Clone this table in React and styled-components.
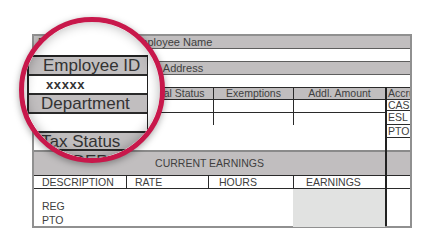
import styled, { createGlobalStyle } from "styled-components";

const GlobalStyle = createGlobalStyle`
  html, body { margin: 0; padding: 0; background: #fff; }
  body { font-family: "Liberation Sans", Arial, sans-serif; }
`;

const WITH_COLS = "97px 82px 80px 92px";
const EARN_COLS = "92px 82px 85px 92px";

const App = () => {
    return (
        <Page>
            <GlobalStyle />
            <Form>
                <Band $h={13}>
                    <SideLabel>Employee ID</SideLabel>
                    <Label>Employee Name</Label>
                </Band>
                <Blank />
                <Band $h={14} $top>
                    <SideLabel>Department</SideLabel>
                    <Label>Home Address</Label>
                </Band>
                <Blank />
                <Main>
                    <Left>
                        <Grid $cols={WITH_COLS} $h={13} $gray $top $bottom>
                            <Cell $center>Tax Status</Cell>
                            <Cell $center>Marital Status</Cell>
                            <Cell $center>Exemptions</Cell>
                            <Cell $center>Addl. Amount</Cell>
                        </Grid>
                        <Grid $cols={WITH_COLS} $h={13} $bottom>
                            <Cell /><Cell /><Cell /><Cell />
                        </Grid>
                        <Grid $cols={WITH_COLS} $h={12}>
                            <Cell /><Cell /><Cell /><Cell />
                        </Grid>
                        <Gap $h={25} />
                        <EarnBand>CURRENT EARNINGS</EarnBand>
                        <Grid $cols={EARN_COLS} $h={13} $bottom>
                            <Cell $pad={8}>DESCRIPTION</Cell>
                            <Cell $pad={8}>RATE</Cell>
                            <Cell $pad={10}>HOURS</Cell>
                            <Cell $pad={12}>EARNINGS</Cell>
                        </Grid>
                        <Body>
                            <Lines>
                                <div>REG</div>
                                <div>PTO</div>
                            </Lines>
                            <div />
                            <div />
                            <Shaded />
                        </Body>
                    </Left>
                    <Acc>
                        <AccRow $h={13} $gray $top>Accruals</AccRow>
                        <AccRow $h={11}>CASH</AccRow>
                        <AccRow $h={14}>ESL</AccRow>
                        <AccRow $h={13}>PTO</AccRow>
                        <Gap $h={12} />
                        <AccBand />
                        <AccRow $h={13} />
                    </Acc>
                </Main>

                <Lens>
                    <Zoomed>
                        <MagRow $gray>Employee ID</MagRow>
                        <MagRow $bold>xxxxx</MagRow>
                        <MagRow $gray $pad={12}>Department</MagRow>
                        <MagRow />
                        <MagRow $gray $pad={12} $h={18}>Tax Status</MagRow>
                        <MagRow $gray $h={32} $pad={22} $top>FEDERAL</MagRow>
                    </Zoomed>
                </Lens>
            </Form>
        </Page>
    );
};

const Page = styled.div`
width: 440px;
height: 252px;
padding: 34px 0 0 32px;
box-sizing: border-box;
overflow: hidden;
`;

const Form = styled.div`
position: relative;
width: 380px;
height: 194px;
box-sizing: border-box;
border: 2px solid #909090;
display: flex;
flex-direction: column;
color: #404040;
font-size: 11px;
line-height: 1;
`;

const Band = styled.div`
display: flex;
align-items: center;
height: ${(p) => p.$h}px;
box-sizing: border-box;
background: #c1bebf;
border-top: ${(p) => (p.$top ? "1px solid #5e5e5e" : "none")};
border-bottom: 1px solid #5e5e5e;
`;

const SideLabel = styled.div`
width: 93px;
padding-left: 4px;
`;

const Label = styled.div`
white-space: nowrap;
`;

const Blank = styled.div`
height: 12px;
`;

const Main = styled.div`
flex: 1;
display: flex;
min-height: 0;
`;

const Left = styled.div`
width: 351px;
display: flex;
flex-direction: column;
`;

const Grid = styled.div`
display: grid;
grid-template-columns: ${(p) => p.$cols};
height: ${(p) => p.$h}px;
box-sizing: border-box;
background: ${(p) => (p.$gray ? "#c1bebf" : "#fff")};
border-top: ${(p) => (p.$top ? "1px solid #2a2a2a" : "none")};
border-bottom: ${(p) => (p.$bottom ? "1px solid #2a2a2a" : "none")};

& > * + * {
    border-left: 1px solid #2a2a2a;
}
`;

const Cell = styled.div`
display: flex;
align-items: center;
justify-content: ${(p) => (p.$center ? "center" : "flex-start")};
padding-left: ${(p) => p.$pad || 0}px;
white-space: nowrap;
overflow: hidden;
font-size: 10.5px;
`;

const Gap = styled.div`
height: ${(p) => p.$h}px;
`;

const EarnBand = styled.div`
height: 26px;
box-sizing: border-box;
display: flex;
align-items: center;
justify-content: center;
background: #c1bebf;
border-top: 2px solid #8a8a8a;
border-bottom: 1px solid #2a2a2a;
font-size: 10.5px;
`;

const Body = styled.div`
flex: 1;
display: grid;
grid-template-columns: ${EARN_COLS};
min-height: 0;
`;

const Lines = styled.div`
padding: 10px 0 0 8px;
font-size: 10.5px;
line-height: 14px;
`;

const Shaded = styled.div`
background: #e1e2e1;
`;

const Acc = styled.div`
width: 25px;
box-sizing: border-box;
border-left: 2px solid #222;
display: flex;
flex-direction: column;
overflow: hidden;
`;

const AccRow = styled.div`
height: ${(p) => p.$h}px;
box-sizing: border-box;
display: flex;
align-items: center;
padding-left: 1px;
white-space: nowrap;
font-size: 10.5px;
background: ${(p) => (p.$gray ? "#c1bebf" : "#fff")};
border-top: ${(p) => (p.$top ? "1px solid #2a2a2a" : "none")};
border-bottom: 1px solid #2a2a2a;
`;

const AccBand = styled.div`
height: 26px;
box-sizing: border-box;
background: #c1bebf;
border-top: 2px solid #8a8a8a;
border-bottom: 1px solid #2a2a2a;
`;

const Lens = styled.div`
position: absolute;
left: -15px;
top: -19px;
width: 146px;
height: 146px;
box-sizing: border-box;
border: 5px solid #c8184b;
border-radius: 50%;
background: #fff;
overflow: hidden;
padding: 33px 0 0 3px;
box-shadow: 0 2px 7px rgba(0, 0, 0, 0.35);
z-index: 2;

&::after {
    content: "";
    position: absolute;
    inset: 0;
    border-radius: 50%;
    box-shadow: inset 0 0 12px rgba(0, 0, 0, 0.3);
}
`;

const Zoomed = styled.div`
width: 121px;
box-sizing: border-box;
border-top: 2px solid #222;
border-left: 2px solid #222;
border-right: 1px solid #222;
`;

const MagRow = styled.div`
height: ${(p) => p.$h || 19}px;
box-sizing: border-box;
display: flex;
align-items: ${(p) => (p.$top ? "flex-start" : "center")};
padding-top: ${(p) => (p.$top ? 2 : 0)}px;
padding-left: ${(p) => (p.$bold ? 17 : p.$pad || 14)}px;
background: ${(p) => (p.$gray ? "#c1bebf" : "#fff")};
border-bottom: 2px solid #2a2a2a;
font-size: ${(p) => (p.$bold ? 13 : 17)}px;
font-weight: ${(p) => (p.$bold ? 700 : 400)};
letter-spacing: ${(p) => (p.$bold ? "0.6px" : "0")};
color: #333;
white-space: nowrap;
`;

export default App;
